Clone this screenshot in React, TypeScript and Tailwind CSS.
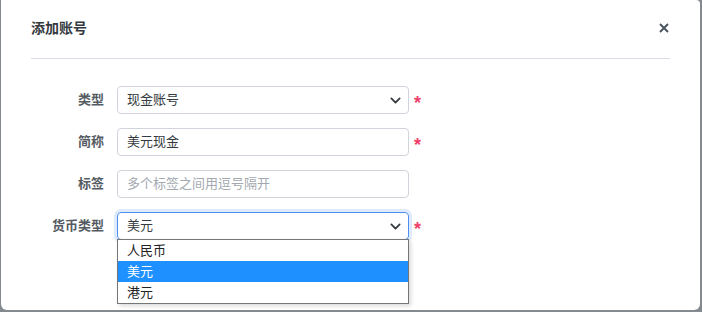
import React from 'react';

const font = { fontFamily: '"Liberation Sans", "Noto Sans CJK SC", sans-serif' };

function Chevron() {
  return (
    <svg className="w-[11px] h-[11px] text-[#343a40]" viewBox="0 0 16 16" fill="none" stroke="currentColor">
      <path d="M2 5l6 6 6-6" strokeWidth={2.6} strokeLinecap="round" strokeLinejoin="round" />
    </svg>
  );
}

function Row({ label, children, required }: { label: string; children: React.ReactNode; required?: boolean }) {
  return (
    <div className="flex items-center h-[28px]">
      <div className="w-[73px] text-right text-[13px] font-bold text-[#555b63]">{label}</div>
      <div className="ml-[13px] w-[292px] relative">{children}</div>
      <div className="ml-[5px] w-[10px] text-[#f0406a] text-[18px] font-bold leading-none pt-[6px]">
        {required ? '*' : ''}
      </div>
    </div>
  );
}

export default function App() {
  return (
    <div className="w-[702px] h-[312px] bg-[#858a90] overflow-hidden" style={font}>
      <div className="ml-[1px] mr-[2px] h-[310px] bg-white rounded-b-[6px] rounded-tr-[4px]">
        {/* 标题 */}
        <div className="mx-[30px] h-[59px] flex items-center justify-between border-b border-[#dcdbe8]">
          <span className="text-[14px] font-bold text-[#343a40] -mt-[2px]">添加账号</span>
          <svg className="w-[10px] h-[10px] mr-[1px] -mt-[2px]" viewBox="0 0 10 10" stroke="#4b5560" strokeWidth={2}>
            <path d="M1 1l8 8M9 1l-8 8" />
          </svg>
        </div>

        {/* 表单 */}
        <div className="pl-[30px] pt-[27px] flex flex-col gap-[14px]">
          <Row label="类型" required>
            <div className="h-[28px] rounded-[4px] border border-[#d1d4dd] flex items-center justify-between pl-[9px] pr-[7px] text-[13px] text-[#343a40]">
              <span>现金账号</span>
              <Chevron />
            </div>
          </Row>
          <Row label="简称" required>
            <div className="h-[28px] rounded-[4px] border border-[#d1d4dd] flex items-center pl-[9px] text-[13px] text-[#343a40]">
              美元现金
            </div>
          </Row>
          <Row label="标签">
            <div className="h-[28px] rounded-[4px] border border-[#d1d4dd] flex items-center pl-[9px] text-[13px] text-[#a3a8b0]">
              多个标签之间用逗号隔开
            </div>
          </Row>
          <Row label="货币类型" required>
            <div className="h-[28px] rounded-[4px] border border-[#4d8ef0] shadow-[0_0_0_3px_rgba(80,140,240,0.18)] flex items-center justify-between pl-[9px] pr-[7px] text-[13px] text-[#343a40]">
              <span>美元</span>
              <Chevron />
            </div>
            <div className="absolute left-0 top-[27px] w-[292px] bg-white border border-[#767676] text-[13px] text-[#222] shadow-[2px_2px_4px_rgba(0,0,0,0.15)]">
              <div className="h-[21px] flex items-center pl-[9px]">人民币</div>
              <div className="h-[21px] flex items-center pl-[9px] bg-[#1e90ff] text-white">美元</div>
              <div className="h-[21px] flex items-center pl-[9px]">港元</div>
            </div>
          </Row>
        </div>
      </div>
    </div>
  );
}
